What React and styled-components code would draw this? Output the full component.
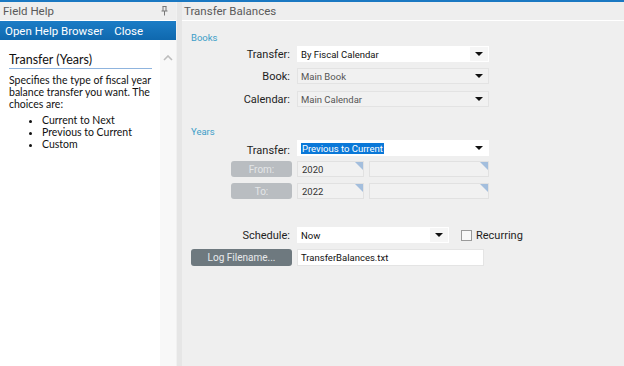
import React from "react";
import styled, { createGlobalStyle } from "styled-components";

const Global = createGlobalStyle`
  html, body { margin: 0; padding: 0; background: #efefef; overflow: hidden; }
  body { font-family: Roboto, "Liberation Sans", Arial, sans-serif; }
  * { box-sizing: border-box; }
`;

const Frame = styled.div`
  width: 624px;
  height: 366px;
  border-top: 2px solid #1a78c2;
  display: flex;
  overflow: hidden;
`;

const LeftPanel = styled.div`
  width: 176px;
  display: flex;
  flex-direction: column;
  background: #fff;
`;

const PanelHeader = styled.div`
  height: 19px;
  background: #eeeeee;
  border-bottom: 1px solid #fff;
  color: #5a5a5a;
  font-size: 11.5px;
  padding-left: ${(p) => p.$pad || 3}px;
  display: flex;
  align-items: center;
  justify-content: space-between;
  padding-right: 8px;
`;

const HelpBar = styled.div`
  height: 19px;
  background: linear-gradient(180deg, #1c7dc6 0%, #0f68ae 100%);
  display: flex;
  align-items: center;
  gap: 11px;
  padding-left: 5px;
  color: #fff;
  font-size: 11.5px;
`;

const HelpBody = styled.div`
  flex: 1;
  display: flex;
`;

const HelpContent = styled.div`
  flex: 1;
  padding: 12px 8px 0 9px;
  font-family: Lato, "Noto Sans", sans-serif;
  color: #111;
`;

const HelpTitle = styled.div`
  font-size: 12.5px;
  line-height: 15px;
  padding-bottom: 1px;
  border-bottom: 1px solid #8fb4de;
  margin-bottom: 5px;
`;

const HelpText = styled.p`
  margin: 0 0 4px;
  font-size: 10.5px;
  line-height: 12px;
  white-space: pre-line;
`;

const HelpList = styled.ul`
  margin: 0;
  padding-left: 33px;
  font-size: 10.5px;
  line-height: 12px;
`;

const ScrollTrack = styled.div`
  width: 16px;
  background: #f8f8f8;
  display: flex;
  justify-content: center;
  padding-top: 15px;
`;

const Divider = styled.div`
  width: 6px;
  background: #e6e6e6;
  border-left: 1px solid #f1f1f1;
`;

const RightPanel = styled.div`
  flex: 1;
  display: flex;
  flex-direction: column;
`;

const Form = styled.div`
  flex: 1;
  background: #efefef;
  padding: 11px 0 0 9px;
`;

const SectionTitle = styled.div`
  color: #3d9ec8;
  font-size: 9.5px;
  height: 11px;
  line-height: 11px;
  margin-bottom: ${(p) => p.$mb || 4}px;
`;

const Row = styled.div`
  display: flex;
  align-items: center;
  height: ${(p) => p.$h || 16}px;
  margin-bottom: ${(p) => p.$mb || 6}px;
`;

const LabelCell = styled.div`
  width: 106px;
  padding-right: 7px;
  font-size: 11px;
  color: #1e1e1e;
  display: flex;
  justify-content: flex-end;
  align-items: ${(p) => p.$align || "center"};
  height: 100%;
`;

const Select = styled.div`
  width: ${(p) => p.$w || 192}px;
  height: 16px;
  background: ${(p) => (p.$white ? "#fff" : "#f1f1f1")};
  border: 1px solid ${(p) => (p.$white ? "#fff" : "#e3e3e3")};
  display: flex;
  align-items: center;
  font-size: 9.5px;
  color: ${(p) => (p.$white ? "#111" : "#555")};
  padding-left: 3px;
`;

const SelectText = styled.span`
  flex: 1;
  white-space: nowrap;
  overflow: hidden;
`;

const Highlight = styled.span`
  background: #0a78d8;
  color: #fff;
  padding: 0 1px;
`;

const Arrow = styled.div`
  width: 18px;
  height: 100%;
  display: flex;
  align-items: center;
  justify-content: center;
  background: ${(p) => (p.$shade ? "#f6f6f6" : "transparent")};
  &::after {
    content: "";
    border-left: 4px solid transparent;
    border-right: 4px solid transparent;
    border-top: 4px solid #111;
  }
`;

const GrayButton = styled.div`
  width: ${(p) => p.$w}px;
  height: ${(p) => p.$h || 16}px;
  border-radius: 3px;
  background: ${(p) => p.$bg};
  color: ${(p) => p.$fg};
  font-size: 10px;
  display: flex;
  align-items: center;
  justify-content: center;
`;

const ButtonCell = styled.div`
  width: 106px;
  display: flex;
  justify-content: flex-end;
  padding-right: 5px;
`;

const YearInput = styled.div`
  width: ${(p) => p.$w}px;
  height: 16px;
  background: #f1f1f1;
  border: 1px solid #e1e1e1;
  font-size: 9.5px;
  color: #333;
  display: flex;
  align-items: center;
  padding-left: 4px;
  margin-right: ${(p) => p.$mr || 0}px;
  position: relative;
  &::after {
    content: "";
    position: absolute;
    right: 0;
    top: 0;
    border-top: 8px solid #a3bedd;
    border-left: 8px solid transparent;
  }
`;

const TextInput = styled.div`
  width: ${(p) => p.$w}px;
  height: 17px;
  background: #fff;
  border: 1px solid #e4e4e4;
  font-size: 9.5px;
  color: #111;
  display: flex;
  align-items: center;
  padding-left: 3px;
`;

const Check = styled.label`
  display: flex;
  align-items: center;
  gap: 4px;
  margin-left: 12px;
  font-size: 11px;
  color: #1e1e1e;
`;

const Box = styled.span`
  width: 11px;
  height: 11px;
  border: 1px solid #9a9a9a;
  background: #f8f8f8;
`;

const Pin = () => (
  <svg width="7" height="10" viewBox="0 0 7 10">
    <path d="M1.5 0.5h4M2 0.5v4.5M5 0.5v4.5M0.5 5h6M3.5 5v4.5" stroke="#777" strokeWidth="1" fill="none" />
  </svg>
);

const Chevron = () => (
  <svg width="10" height="6" viewBox="0 0 10 6">
    <path d="M1 5 L5 1 L9 5" stroke="#bdbdbd" strokeWidth="1.6" fill="none" />
  </svg>
);

export default function App() {
  return (
    <>
      <Global />
      <Frame>
        <LeftPanel>
          <PanelHeader>
            <span>Field Help</span>
            <Pin />
          </PanelHeader>
          <HelpBar>
            <span>Open Help Browser</span>
            <span>Close</span>
          </HelpBar>
          <HelpBody>
            <HelpContent>
              <HelpTitle>Transfer (Years)</HelpTitle>
              <HelpText>
                {"Specifies the type of fiscal year\nbalance transfer you want. The\nchoices are:"}
              </HelpText>
              <HelpList>
                <li>Current to Next</li>
                <li>Previous to Current</li>
                <li>Custom</li>
              </HelpList>
            </HelpContent>
            <ScrollTrack>
              <Chevron />
            </ScrollTrack>
          </HelpBody>
        </LeftPanel>
        <Divider />
        <RightPanel>
          <PanelHeader $pad={2}>
            <span>Transfer Balances</span>
          </PanelHeader>
          <Form>
            <SectionTitle $mb={3}>Books</SectionTitle>
            <Row>
              <LabelCell>Transfer:</LabelCell>
              <Select $white>
                <SelectText>By Fiscal Calendar</SelectText>
                <Arrow $shade />
              </Select>
            </Row>
            <Row $mb={7}>
              <LabelCell>Book:</LabelCell>
              <Select>
                <SelectText>Main Book</SelectText>
                <Arrow />
              </Select>
            </Row>
            <Row $mb={19}>
              <LabelCell>Calendar:</LabelCell>
              <Select>
                <SelectText>Main Calendar</SelectText>
                <Arrow />
              </Select>
            </Row>
            <SectionTitle $mb={2}>Years</SectionTitle>
            <Row $h={18} $mb={4}>
              <LabelCell $align="flex-end">Transfer:</LabelCell>
              <Select $white>
                <SelectText>
                  <Highlight>Previous to Current</Highlight>
                </SelectText>
                <Arrow />
              </Select>
            </Row>
            <Row>
              <ButtonCell>
                <GrayButton $w={61} $bg="#b9bdc1" $fg="#e4e6e8">From:</GrayButton>
              </ButtonCell>
              <YearInput $w={67} $mr={5}>2020</YearInput>
              <YearInput $w={120} />
            </Row>
            <Row $mb={28}>
              <ButtonCell>
                <GrayButton $w={61} $bg="#b9bdc1" $fg="#e4e6e8">To:</GrayButton>
              </ButtonCell>
              <YearInput $w={67} $mr={5}>2022</YearInput>
              <YearInput $w={120} />
            </Row>
            <Row>
              <LabelCell>Schedule:</LabelCell>
              <Select $w={152} $white>
                <SelectText>Now</SelectText>
                <Arrow $shade />
              </Select>
              <Check>
                <Box />
                Recurring
              </Check>
            </Row>
            <Row $h={17}>
              <ButtonCell>
                <GrayButton $w={101} $h={17} $bg="#6e797f" $fg="#e8eaec">Log Filename...</GrayButton>
              </ButtonCell>
              <TextInput $w={187}>TransferBalances.txt</TextInput>
            </Row>
          </Form>
        </RightPanel>
      </Frame>
    </>
  );
}
